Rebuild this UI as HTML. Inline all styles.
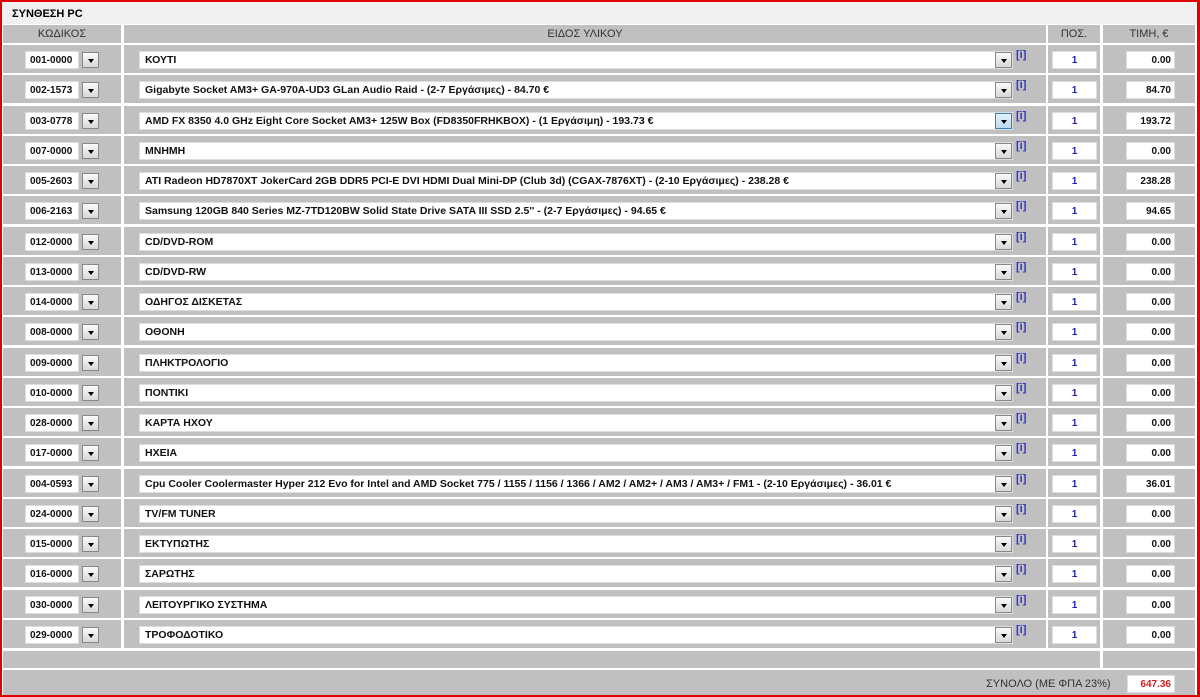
<!DOCTYPE html>
<html><head><meta charset="utf-8"><style>
*{margin:0;padding:0;box-sizing:border-box}
body{width:1200px;height:697px;background:#fff;font-family:"Liberation Sans","DejaVu Sans",sans-serif;position:relative;overflow:hidden}
.frame{position:absolute;left:0;top:0;width:1200px;height:697px;border:2px solid #e00000;border-right-width:3px}
.title{position:absolute;left:2px;top:2px;width:1196px;height:22px;background:#f0f0f0;font-size:11px;font-weight:bold;padding:6px 0 0 10px}
.c{position:absolute;background:#c0c0c0}
.h{font-size:11px;color:#333;text-align:center;line-height:18px}
.in{position:absolute;background:#fff;border:1px solid #ddd;font-size:10px;font-weight:bold;height:18px;color:#111;display:flex;align-items:center;white-space:nowrap}
.btn{position:absolute;width:17px;height:16px;background:linear-gradient(#fafafa,#d8d8d8);border:1px solid #888}
.btn:after{content:"";position:absolute;left:5px;top:6px;border-left:3px solid transparent;border-right:3px solid transparent;border-top:4px solid #000}
.i{position:absolute;font-size:11px;color:#3333cc;font-weight:bold}
.q{color:#2222aa;justify-content:center}
.p{justify-content:flex-end;padding-right:3px}
.it{font-size:10.5px}
</style></head><body>
<div class="title">ΣΥΝΘΕΣΗ PC</div>
<div class="c h" style="left:3px;top:25px;width:118px;height:18px">ΚΩΔΙΚΟΣ</div>
<div class="c h" style="left:124px;top:25px;width:922px;height:18px">ΕΙΔΟΣ ΥΛΙΚΟΥ</div>
<div class="c h" style="left:1048px;top:25px;width:52px;height:18px">ΠΟΣ.</div>
<div class="c h" style="left:1103px;top:25px;width:92px;height:18px">ΤΙΜΗ, €</div>
<div id="rows"></div>
<div class="c" style="left:3px;top:651px;width:1097px;height:17px"></div>
<div class="c" style="left:1103px;top:651px;width:92px;height:17px"></div>
<div class="c" style="left:3px;top:670px;width:1192px;height:25px"></div>
<div style="position:absolute;left:986px;top:678px;font-size:11px;color:#333">ΣΥΝΟΛΟ (ΜΕ ΦΠΑ 23%)</div>
<div class="in p" style="left:1127px;top:675px;width:48px;color:#d02020">647.36</div>
<div class="frame"></div>
<script>
var d=[["001-0000","ΚΟΥΤΙ","0.00"],["002-1573","Gigabyte Socket AM3+ GA-970A-UD3 GLan Audio Raid - (2-7 Εργάσιμες) - 84.70 €","84.70"],["003-0778","AMD FX 8350 4.0 GHz Eight Core Socket AM3+ 125W Box (FD8350FRHKBOX) - (1 Εργάσιμη) - 193.73 €","193.72"],["007-0000","ΜΝΗΜΗ","0.00"],["005-2603","ATI Radeon HD7870XT JokerCard 2GB DDR5 PCI-E DVI HDMI Dual Mini-DP (Club 3d) (CGAX-7876XT) - (2-10 Εργάσιμες) - 238.28 €","238.28"],["006-2163","Samsung 120GB 840 Series MZ-7TD120BW Solid State Drive SATA III SSD 2.5'' - (2-7 Εργάσιμες) - 94.65 €","94.65"],["012-0000","CD/DVD-ROM","0.00"],["013-0000","CD/DVD-RW","0.00"],["014-0000","ΟΔΗΓΟΣ ΔΙΣΚΕΤΑΣ","0.00"],["008-0000","ΟΘΟΝΗ","0.00"],["009-0000","ΠΛΗΚΤΡΟΛΟΓΙΟ","0.00"],["010-0000","ΠΟΝΤΙΚΙ","0.00"],["028-0000","ΚΑΡΤΑ ΗΧΟΥ","0.00"],["017-0000","ΗΧΕΙΑ","0.00"],["004-0593","Cpu Cooler Coolermaster Hyper 212 Evo for Intel and AMD Socket 775 / 1155 / 1156 / 1366 / AM2 / AM2+ / AM3 / AM3+ / FM1 - (2-10 Εργάσιμες) - 36.01 €","36.01"],["024-0000","TV/FM TUNER","0.00"],["015-0000","ΕΚΤΥΠΩΤΗΣ","0.00"],["016-0000","ΣΑΡΩΤΗΣ","0.00"],["030-0000","ΛΕΙΤΟΥΡΓΙΚΟ ΣΥΣΤΗΜΑ","0.00"],["029-0000","ΤΡΟΦΟΔΟΤΙΚΟ","0.00"]];
var h="";
for(var i=0;i<20;i++){var t=Math.round(45+i*30.26),c=t+15;
h+='<div class="c" style="left:3px;top:'+t+'px;width:118px;height:28px"></div>'+
'<div class="c" style="left:124px;top:'+t+'px;width:922px;height:28px"></div>'+
'<div class="c" style="left:1048px;top:'+t+'px;width:52px;height:28px"></div>'+
'<div class="c" style="left:1103px;top:'+t+'px;width:92px;height:28px"></div>'+
'<div class="in" style="left:25px;top:'+(c-9)+'px;width:54px;padding-left:4px">'+d[i][0]+'</div>'+
'<div class="btn" style="left:82px;top:'+(c-8)+'px"></div>'+
'<div class="in it" style="left:139px;top:'+(c-9)+'px;width:874px;padding-left:5px">'+d[i][1]+'</div>'+
'<div class="btn" style="left:995px;top:'+(c-8)+'px'+(i==2?';background:linear-gradient(#e4f2fb,#b8dcf2);border-color:#3c7fb1':'')+'"></div>'+
'<div class="i" style="left:1016px;top:'+(c-11)+'px">[i]</div>'+
'<div class="in q" style="left:1052px;top:'+(c-9)+'px;width:45px">1</div>'+
'<div class="in p" style="left:1126px;top:'+(c-9)+'px;width:49px">'+d[i][2]+'</div>';}
document.getElementById("rows").innerHTML=h;
</script>
</body></html>
